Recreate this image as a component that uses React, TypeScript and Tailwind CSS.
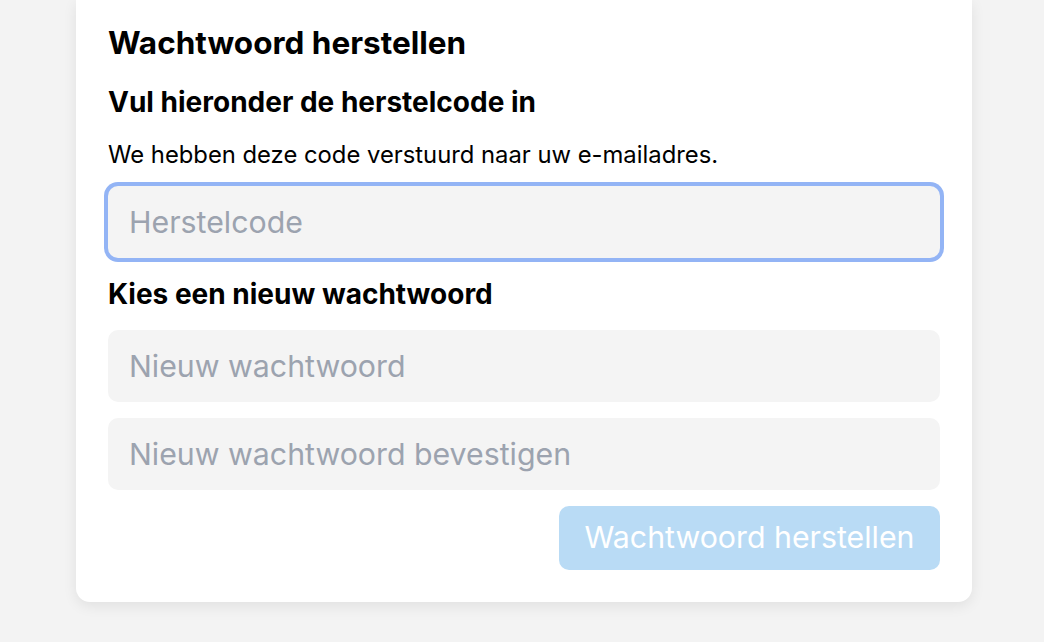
const font = { fontFamily: "Inter, 'Noto Sans', sans-serif" };

const Field = ({ placeholder, focused }: { placeholder: string; focused?: boolean }) => (
  <input
    type="text"
    placeholder={placeholder}
    readOnly
    className={`block w-full h-[72px] rounded-[10px] bg-[#f4f4f4] px-[21px] text-[30.3px] text-black placeholder:text-[#9ca3af] outline-none ${
      focused ? "ring-4 ring-[#93b4f5]" : ""
    }`}
  />
);

export default function App() {
  return (
    <div className="min-h-[642px] w-full bg-[#f3f3f3] pl-[76px]" style={font}>
      <div className="w-[896px] rounded-b-[14px] bg-white px-8 pt-[25px] pb-8 shadow-[0_4px_14px_rgba(0,0,0,0.08)]">
        <h1 className="text-[31.5px] leading-[36px] font-bold text-black">Wachtwoord herstellen</h1>
        <h2 className="mt-[25px] text-[28px] leading-[32px] font-bold text-black">
          Vul hieronder de herstelcode in
        </h2>
        <p className="mt-[23px] text-[23.8px] leading-[28px] text-black">
          We hebben deze code verstuurd naar uw e-mailadres.
        </p>
        <div className="mt-[17px]">
          <Field placeholder="Herstelcode" focused />
        </div>
        <h2 className="mt-[20px] text-[28px] leading-[32px] font-bold text-black">Kies een nieuw wachtwoord</h2>
        <div className="mt-[20px] flex flex-col gap-4">
          <Field placeholder="Nieuw wachtwoord" />
          <Field placeholder="Nieuw wachtwoord bevestigen" />
        </div>
        <div className="mt-4 flex justify-end">
          <button
            type="button"
            disabled
            className="h-16 w-[381px] rounded-[10px] bg-[#b9dbf5] text-[30.3px] text-white"
          >
            Wachtwoord herstellen
          </button>
        </div>
      </div>
    </div>
  );
}
